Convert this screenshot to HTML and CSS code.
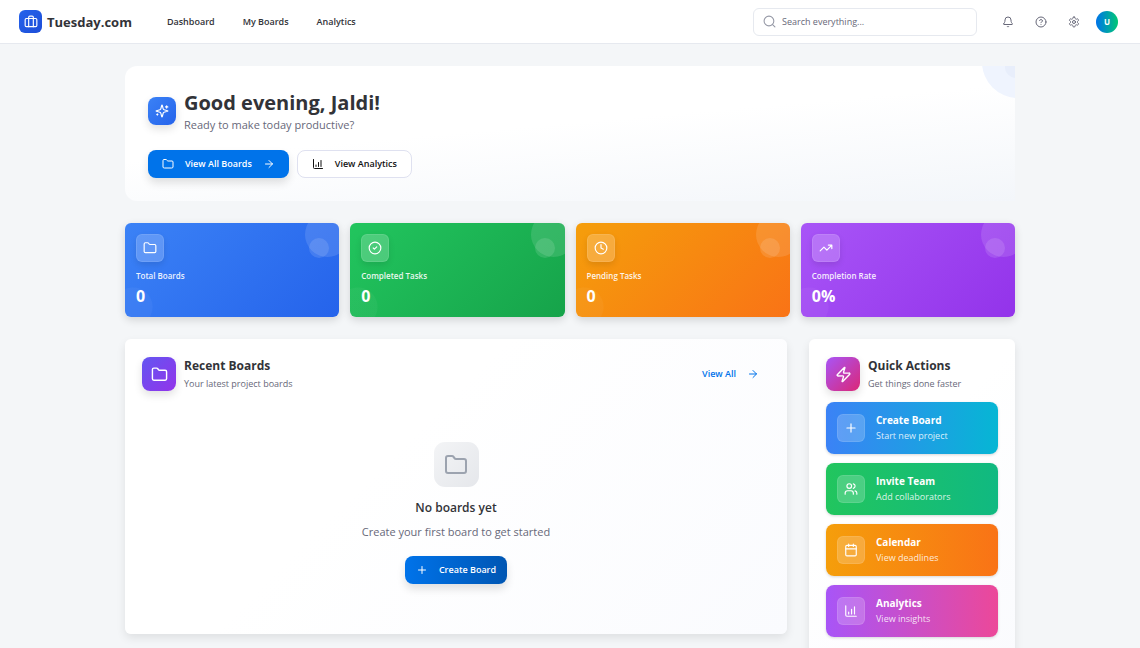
FILE: index.html
```html
<!DOCTYPE html>
<html lang="en">
<head>
    <meta charset="UTF-8">
    <meta name="viewport" content="width=device-width, initial-scale=1.0">
    <title>Tuesday.com</title>
    <link rel="stylesheet" href="styles.css">
</head>
<body>
    <!-- shared icons -->
    <svg class="sprite" aria-hidden="true">
        <symbol id="folder" viewBox="0 0 24 24"><path d="M20 20a2 2 0 0 0 2-2V8a2 2 0 0 0-2-2h-7.9a2 2 0 0 1-1.69-.9L9.6 3.9A2 2 0 0 0 7.93 3H4a2 2 0 0 0-2 2v13a2 2 0 0 0 2 2Z"/></symbol>
        <symbol id="arrow" viewBox="0 0 24 24"><path d="M5 12h14M12 5l7 7-7 7"/></symbol>
        <symbol id="plus" viewBox="0 0 24 24"><path d="M5 12h14M12 5v14"/></symbol>
        <symbol id="chart" viewBox="0 0 24 24"><path d="M3 3v16a2 2 0 0 0 2 2h16M13 17V9M18 17V5M8 17v-3"/></symbol>
    </svg>

    <header class="header">
        <a class="brand" href="#">
            <span class="brand-icon">
                <svg class="icon" viewBox="0 0 24 24"><rect x="2" y="6" width="20" height="14" rx="2"/><path d="M8 20V4a2 2 0 0 1 2-2h4a2 2 0 0 1 2 2v16"/></svg>
            </span>
            Tuesday.com
        </a>
        <nav class="nav">
            <a href="#">Dashboard</a>
            <a href="#">My Boards</a>
            <a href="#">Analytics</a>
        </nav>
        <label class="search">
            <svg class="icon" viewBox="0 0 24 24"><circle cx="11" cy="11" r="9"/><path d="m22 22-4.3-4.3"/></svg>
            <input type="text" placeholder="Search everything..." aria-label="Search everything">
        </label>
        <div class="tools">
            <button class="tool" aria-label="Notifications">
                <svg class="icon" viewBox="0 0 24 24"><path d="M10.27 21a2 2 0 0 0 3.46 0M3.26 15.33A1 1 0 0 0 4 17h16a1 1 0 0 0 .74-1.67C19.41 13.96 18 12.5 18 8A6 6 0 0 0 6 8c0 4.5-1.41 5.96-2.74 7.33"/></svg>
            </button>
            <button class="tool" aria-label="Help">
                <svg class="icon" viewBox="0 0 24 24"><circle cx="12" cy="12" r="10"/><path d="M9.09 9a3 3 0 0 1 5.83 1c0 2-3 3-3 3M12 17h.01"/></svg>
            </button>
            <button class="tool" aria-label="Settings">
                <svg class="icon" viewBox="0 0 24 24"><path d="M12.22 2h-.44a2 2 0 0 0-2 2v.18a2 2 0 0 1-1 1.73l-.43.25a2 2 0 0 1-2 0l-.15-.08a2 2 0 0 0-2.73.73l-.22.38a2 2 0 0 0 .73 2.73l.15.1a2 2 0 0 1 1 1.72v.51a2 2 0 0 1-1 1.74l-.15.09a2 2 0 0 0-.73 2.73l.22.38a2 2 0 0 0 2.73.73l.15-.08a2 2 0 0 1 2 0l.43.25a2 2 0 0 1 1 1.73V20a2 2 0 0 0 2 2h.44a2 2 0 0 0 2-2v-.18a2 2 0 0 1 1-1.73l.43-.25a2 2 0 0 1 2 0l.15.08a2 2 0 0 0 2.73-.73l.22-.39a2 2 0 0 0-.73-2.73l-.15-.08a2 2 0 0 1-1-1.74v-.5a2 2 0 0 1 1-1.74l.15-.09a2 2 0 0 0 .73-2.73l-.22-.38a2 2 0 0 0-2.73-.73l-.15.08a2 2 0 0 1-2 0l-.43-.25a2 2 0 0 1-1-1.73V4a2 2 0 0 0-2-2z"/><circle cx="12" cy="12" r="3"/></svg>
            </button>
            <button class="avatar" aria-label="Account">U</button>
        </div>
    </header>

    <main class="container">
        <section class="hero">
            <div class="hero-top">
                <span class="tile tile-blue">
                    <svg class="icon" viewBox="0 0 24 24"><path d="M9.94 15.5A2 2 0 0 0 8.5 14.06l-6.14-1.58a.5.5 0 0 1 0-.96L8.5 9.94A2 2 0 0 0 9.94 8.5l1.58-6.14a.5.5 0 0 1 .96 0l1.58 6.14a2 2 0 0 0 1.44 1.44l6.14 1.58a.5.5 0 0 1 0 .96l-6.14 1.58a2 2 0 0 0-1.44 1.44l-1.58 6.14a.5.5 0 0 1-.96 0zM20 3v4M22 5h-4M4 17v2M5 18H3"/></svg>
                </span>
                <div>
                    <h1>Good evening, Jaldi!</h1>
                    <p>Ready to make today productive?</p>
                </div>
            </div>
            <div class="hero-buttons">
                <button class="btn btn-primary">
                    <svg class="icon"><use href="#folder"/></svg>
                    View All Boards
                    <svg class="icon"><use href="#arrow"/></svg>
                </button>
                <button class="btn btn-outline">
                    <svg class="icon"><use href="#chart"/></svg>
                    View Analytics
                </button>
            </div>
        </section>

        <section class="stats">
            <div class="stat blue">
                <span class="glass"><svg class="icon"><use href="#folder"/></svg></span>
                <p>Total Boards</p>
                <strong>0</strong>
            </div>
            <div class="stat green">
                <span class="glass"><svg class="icon" viewBox="0 0 24 24"><circle cx="12" cy="12" r="10"/><path d="m9 12 2 2 4-4"/></svg></span>
                <p>Completed Tasks</p>
                <strong>0</strong>
            </div>
            <div class="stat orange">
                <span class="glass"><svg class="icon" viewBox="0 0 24 24"><circle cx="12" cy="12" r="10"/><path d="M12 6v6l4 2"/></svg></span>
                <p>Pending Tasks</p>
                <strong>0</strong>
            </div>
            <div class="stat purple">
                <span class="glass"><svg class="icon" viewBox="0 0 24 24"><path d="m22 7-8.5 8.5-5-5L2 17M16 7h6v6"/></svg></span>
                <p>Completion Rate</p>
                <strong>0%</strong>
            </div>
        </section>

        <div class="columns">
            <section class="card recent">
                <div class="card-head">
                    <span class="tile tile-large tile-indigo"><svg class="icon"><use href="#folder"/></svg></span>
                    <div>
                        <h2>Recent Boards</h2>
                        <p>Your latest project boards</p>
                    </div>
                    <a class="view-all" href="#">View All <svg class="icon"><use href="#arrow"/></svg></a>
                </div>
                <div class="empty">
                    <span class="empty-icon"><svg class="icon"><use href="#folder"/></svg></span>
                    <h3>No boards yet</h3>
                    <p>Create your first board to get started</p>
                    <button class="btn btn-create">
                        <svg class="icon"><use href="#plus"/></svg>
                        Create Board
                    </button>
                </div>
            </section>

            <aside class="card quick">
                <div class="card-head">
                    <span class="tile tile-large tile-pink"><svg class="icon" viewBox="0 0 24 24"><path d="M4 14a1 1 0 0 1-.78-1.63l9.9-10.2a.5.5 0 0 1 .86.46l-1.92 6.02A1 1 0 0 0 13 10h7a1 1 0 0 1 .78 1.63l-9.9 10.2a.5.5 0 0 1-.86-.46l1.92-6.02A1 1 0 0 0 11 14z"/></svg></span>
                    <div>
                        <h2>Quick Actions</h2>
                        <p>Get things done faster</p>
                    </div>
                </div>
                <div class="actions">
                    <button class="action cyan">
                        <span class="glass"><svg class="icon"><use href="#plus"/></svg></span>
                        <span class="action-text"><b>Create Board</b>Start new project</span>
                    </button>
                    <button class="action emerald">
                        <span class="glass"><svg class="icon" viewBox="0 0 24 24"><path d="M16 21v-2a4 4 0 0 0-4-4H6a4 4 0 0 0-4 4v2M22 21v-2a4 4 0 0 0-3-3.87M16 3.13a4 4 0 0 1 0 7.75"/><circle cx="9" cy="7" r="4"/></svg></span>
                        <span class="action-text"><b>Invite Team</b>Add collaborators</span>
                    </button>
                    <button class="action amber">
                        <span class="glass"><svg class="icon" viewBox="0 0 24 24"><path d="M8 2v4M16 2v4M3 10h18"/><rect x="3" y="4" width="18" height="18" rx="2"/></svg></span>
                        <span class="action-text"><b>Calendar</b>View deadlines</span>
                    </button>
                    <button class="action pink">
                        <span class="glass"><svg class="icon"><use href="#chart"/></svg></span>
                        <span class="action-text"><b>Analytics</b>View insights</span>
                    </button>
                </div>
            </aside>
        </div>
    </main>
</body>
</html>
```

FILE: styles.css
```css
* {
    box-sizing: border-box;
}
body {
    margin: 0;
    font-family: "Segoe UI", "Open Sans", "Noto Sans", sans-serif;
    font-size: 9px;
    line-height: 16px;
    color: #323338;
    background-color: #f4f6f8;
}
h1, h2, h3, p {
    margin: 0;
}
a {
    color: inherit;
    text-decoration: none;
}
button {
    font: inherit;
    color: inherit;
    border: none;
    padding: 0;
    background: none;
    cursor: pointer;
}
.sprite {
    display: none;
}
.icon {
    width: 12px;
    height: 12px;
    flex: none;
    fill: none;
    stroke: currentColor;
    stroke-width: 2;
    stroke-linecap: round;
    stroke-linejoin: round;
}

/* Header */
.header {
    display: flex;
    align-items: center;
    height: 44px;
    padding: 0 22px 0 19px;
    background-color: #fff;
    border-bottom: 1px solid #e6e9ef;
}
.brand {
    display: flex;
    align-items: center;
    gap: 5px;
    font-size: 13px;
    font-weight: 700;
}
.brand-icon {
    display: grid;
    place-items: center;
    width: 23px;
    height: 23px;
    border-radius: 6px;
    color: #fff;
    background: linear-gradient(135deg, #2563eb, #1d4ed8);
}
.brand-icon .icon {
    width: 14px;
    height: 14px;
}
.nav {
    display: flex;
    gap: 28px;
    margin-left: 35px;
    font-weight: 600;
}
.search {
    display: flex;
    align-items: center;
    gap: 6px;
    width: 224px;
    height: 28px;
    margin-left: auto;
    padding: 0 9px;
    border: 1px solid #e6e9ef;
    border-radius: 6px;
    color: #9699a6;
}
.search .icon {
    width: 13px;
    height: 13px;
}
.search input {
    flex: 1;
    min-width: 0;
    padding: 0;
    border: none;
    outline: none;
    font: inherit;
    background: none;
}
.search input::placeholder {
    color: #676879;
}
.tools {
    display: flex;
    align-items: center;
    gap: 11px;
    margin-left: 20px;
    color: #676879;
}
.tool {
    display: grid;
    place-items: center;
    width: 22px;
    height: 22px;
}
.avatar {
    width: 22px;
    height: 22px;
    border-radius: 50%;
    font-size: 8px;
    font-weight: 700;
    color: #fff;
    background: linear-gradient(90deg, #0073ea, #00c875);
}

/* Page */
.container {
    max-width: 934px;
    margin: 0 auto;
    padding: 22px;
}
.tile {
    display: grid;
    place-items: center;
    flex: none;
    width: 28px;
    height: 28px;
    border-radius: 8px;
    color: #fff;
    box-shadow: 0 4px 8px rgba(0, 0, 0, 0.12);
}
.tile .icon {
    width: 14px;
    height: 14px;
}
.tile-large {
    width: 34px;
    height: 34px;
}
.tile-large .icon {
    width: 17px;
    height: 17px;
}
.tile-blue {
    background: linear-gradient(135deg, #3b82f6, #2563eb);
}
.tile-indigo {
    background: linear-gradient(135deg, #6356f1, #9333ea);
}
.tile-pink {
    background: linear-gradient(135deg, #a855f7, #db2777);
}
.btn {
    display: inline-flex;
    align-items: center;
    gap: 11px;
    height: 28px;
    padding: 0 14px;
    border-radius: 8px;
    font-weight: 600;
}
.btn-primary {
    color: #fff;
    background-color: #0073ea;
    box-shadow: 0 5px 9px rgba(0, 0, 0, 0.12);
}
.btn-outline {
    color: #111;
    border: 1px solid #dfe1f0;
    background-color: #fff;
}
.btn-create {
    padding: 0 11px;
    color: #fff;
    background: linear-gradient(90deg, #0073ea, #0056b3);
    box-shadow: 0 5px 9px rgba(0, 0, 0, 0.12);
}

/* Greeting */
.hero {
    position: relative;
    overflow: hidden;
    padding: 23px;
    border-radius: 12px 0 0 12px;
    background: linear-gradient(175deg, #fff 45%, #f3f6fa);
}
.hero::before,
.hero::after {
    content: "";
    position: absolute;
    border-radius: 50%;
}
.hero::before {
    top: -40px;
    right: -39px;
    width: 72px;
    height: 72px;
    background-color: #eff4fe;
}
.hero::after {
    top: -10px;
    right: -12px;
    width: 22px;
    height: 22px;
    background-color: #e8eefb;
}
.hero-top {
    display: flex;
    align-items: center;
    gap: 8px;
    margin-bottom: 17px;
}
.hero h1 {
    font-size: 20px;
    line-height: 28px;
}
.hero p {
    font-size: 11px;
    line-height: 16px;
    color: #676879;
}
.hero-buttons {
    display: flex;
    gap: 8px;
}

/* Stat cards */
.stats {
    display: grid;
    grid-template-columns: repeat(4, 1fr);
    gap: 11px;
    margin: 22px 0;
}
.stat {
    position: relative;
    overflow: hidden;
    padding: 11px;
    border-radius: 6px;
    color: #fff;
    box-shadow: 0 3px 8px rgba(0, 0, 0, 0.14);
}
.stat::before {
    content: "";
    position: absolute;
    top: -11px;
    right: -11px;
    width: 45px;
    height: 45px;
    border-radius: 50%;
    background-color: rgba(255, 255, 255, 0.12);
}
.stat::after {
    content: "";
    position: absolute;
    top: 15px;
    right: 10px;
    width: 20px;
    height: 20px;
    border-radius: 50%;
    background-color: rgba(255, 255, 255, 0.12);
}
.stat p {
    margin-top: 8px;
    font-size: 8px;
    line-height: 12px;
    font-weight: 600;
    opacity: 0.9;
}
.stat strong {
    display: block;
    margin-top: 4px;
    font-size: 16px;
    line-height: 20px;
}
.glass {
    display: grid;
    place-items: center;
    flex: none;
    width: 28px;
    height: 28px;
    border: 1px solid rgba(255, 255, 255, 0.1);
    border-radius: 6px;
    color: #fff;
    background-color: rgba(255, 255, 255, 0.2);
}
.glass .icon {
    width: 14px;
    height: 14px;
}
.stat .glass {
    box-shadow: 0 3px 6px rgba(0, 0, 0, 0.1);
}
.blue {
    background: radial-gradient(circle at 8px 84px, rgba(255, 255, 255, 0.04) 19px, transparent 20px), linear-gradient(135deg, #3b82f6, #2563eb);
}
.green {
    background: radial-gradient(circle at 8px 84px, rgba(255, 255, 255, 0.04) 19px, transparent 20px), linear-gradient(135deg, #22c55e, #16a34a);
}
.orange {
    background: radial-gradient(circle at 8px 84px, rgba(255, 255, 255, 0.04) 19px, transparent 20px), linear-gradient(135deg, #f59e0b, #f97316);
}
.purple {
    background: radial-gradient(circle at 8px 84px, rgba(255, 255, 255, 0.04) 19px, transparent 20px), linear-gradient(135deg, #a855f7, #9333ea);
}

/* Boards and actions */
.columns {
    display: grid;
    grid-template-columns: minmax(0, 1fr) 206px;
    align-items: start;
    gap: 22px;
}
.card {
    padding: 17px;
    border-radius: 6px;
    background: linear-gradient(135deg, #fff 40%, #fafbfe);
    box-shadow: 0 4px 10px rgba(0, 0, 0, 0.09);
}
.card-head {
    display: flex;
    align-items: center;
    gap: 8px;
}
.card h2 {
    font-size: 12px;
    line-height: 20px;
}
.card-head p {
    line-height: 16px;
    color: #676879;
}
.view-all {
    display: flex;
    align-items: center;
    gap: 11px;
    margin-left: auto;
    padding-right: 11px;
    font-weight: 600;
    color: #0073ea;
}
.empty {
    display: flex;
    flex-direction: column;
    align-items: center;
    padding: 50px 0 33px;
}
.empty-icon {
    display: grid;
    place-items: center;
    width: 45px;
    height: 45px;
    margin-bottom: 11px;
    border-radius: 11px;
    color: #9ca3af;
    background: linear-gradient(135deg, #f3f4f6, #e5e7eb);
}
.empty-icon .icon {
    width: 24px;
    height: 24px;
}
.empty h3 {
    font-size: 12px;
    line-height: 20px;
    font-weight: 600;
}
.empty p {
    margin: 6px 0 16px;
    font-size: 11px;
    line-height: 16px;
    color: #676879;
}
.quick {
    padding-bottom: 28px;
}
.actions {
    display: grid;
    gap: 9px;
    margin-top: 10px;
}
.action {
    display: flex;
    align-items: center;
    gap: 11px;
    height: 52px;
    padding: 0 11px;
    border-radius: 8px;
    text-align: left;
    color: #fff;
    box-shadow: 0 1px 3px rgba(0, 0, 0, 0.16);
}
.action-text {
    line-height: 15px;
    color: rgba(255, 255, 255, 0.85);
}
.action-text b {
    display: block;
    font-size: 10px;
    color: #fff;
}
.cyan {
    background: linear-gradient(90deg, #3b82f6, #06b6d4);
}
.emerald {
    background: linear-gradient(90deg, #22c55e, #10b981);
}
.amber {
    background: linear-gradient(90deg, #f59e0b, #f97316);
}
.pink {
    background: linear-gradient(90deg, #a855f7, #ec4899);
}
```
